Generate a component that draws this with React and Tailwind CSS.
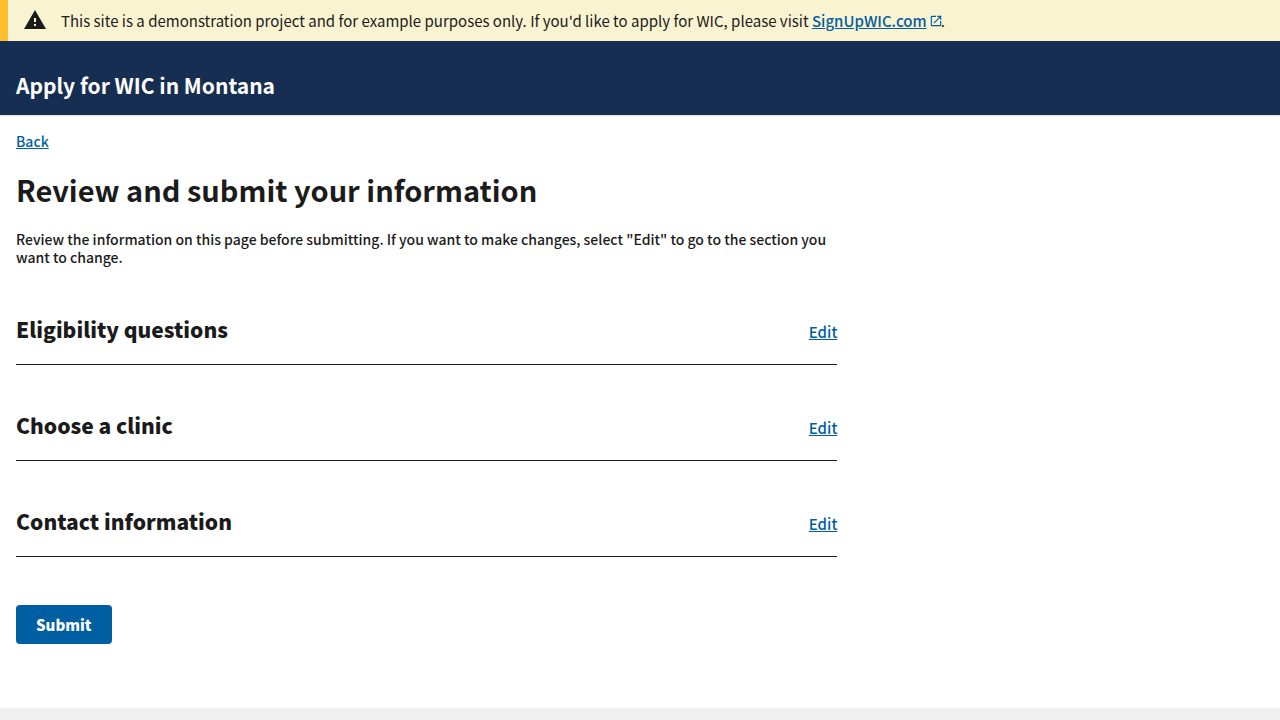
const sections = [
  { id: "eligibility", title: "Eligibility questions" },
  { id: "clinic", title: "Choose a clinic" },
  { id: "contact", title: "Contact information" },
];

function WarningIcon() {
  return (
    <svg className="mb-px size-6 shrink-0" viewBox="0 0 24 24" fill="currentColor" aria-hidden="true">
      <path d="M1 21h22L12 2 1 21zm12-3h-2v-2h2v2zm0-4h-2v-4h2v4z" />
    </svg>
  );
}

function LaunchIcon() {
  return (
    <svg className="-mr-0.5 ml-0.5 inline-block size-3.5 align-[-1px]" viewBox="0 0 24 24" fill="currentColor" aria-hidden="true">
      <path d="M19 19H5V5h7V3H5a2 2 0 0 0-2 2v14a2 2 0 0 0 2 2h14c1.1 0 2-.9 2-2v-7h-2v7zM14 3v2h3.59l-9.83 9.83 1.41 1.41L19 6.41V10h2V3h-7z" />
    </svg>
  );
}

function DemoBanner() {
  return (
    <div className="flex items-center gap-3.5 border-l-8 border-[#ffbe2e] bg-[#faf3d1] py-2 pl-[15px] pr-4">
      <WarningIcon />
      <p className="text-[15px] leading-[25px]">
        This site is a demonstration project and for example purposes only. If you'd like to apply for WIC, please visit{" "}
        <a href="https://signupwic.com" className="font-medium text-[#005ea2]">
          <span className="underline">SignUpWIC.com</span>
          <LaunchIcon />
        </a>
        .
      </p>
    </div>
  );
}

function ReviewSection({ id, title }) {
  return (
    <section aria-labelledby={id} className="flex items-center justify-between border-b border-[#1b1b1b] pt-[47px] pb-[21px]">
      <h2 id={id} className="text-[21px] leading-[27px] font-black">{title}</h2>
      <a href={"#" + id} aria-label={"Edit " + title} className="pt-1 text-[15px] leading-5 font-medium text-[#005ea2] underline">
        Edit
      </a>
    </section>
  );
}

export default function App() {
  return (
    <div className="flex min-h-screen flex-col bg-white font-['Noto_Sans_CJK_SC','Noto_Sans',sans-serif] text-[#1b1b1b]">
      <DemoBanner />
      <header className="border-b border-[#dfe1e2] bg-[#162e51] px-4 pt-8 pb-[18px]">
        <p className="text-[21px] leading-6 font-bold text-white">Apply for WIC in Montana</p>
      </header>
      <main className="w-2/3 px-4 pt-4 pb-16">
        <a href="#back" className="block w-fit text-[14px] leading-[18px] font-medium text-[#005ea2] underline">Back</a>
        <h1 className="mt-[19px] text-[29px] leading-10 font-bold">Review and submit your information</h1>
        <p className="mt-[21px] mb-[3px] text-[14px] leading-[18px] font-medium">
          Review the information on this page before submitting. If you want to make changes, select "Edit" to go to the
          section you want to change.
        </p>
        {sections.map((section) => (
          <ReviewSection key={section.id} {...section} />
        ))}
        <button type="button" className="mt-12 block rounded bg-[#005ea2] px-5 py-3 text-[15px] leading-[15px] font-black text-white">
          Submit
        </button>
      </main>
      <footer className="min-h-3 grow bg-[#f0f0f0]" />
    </div>
  );
}
